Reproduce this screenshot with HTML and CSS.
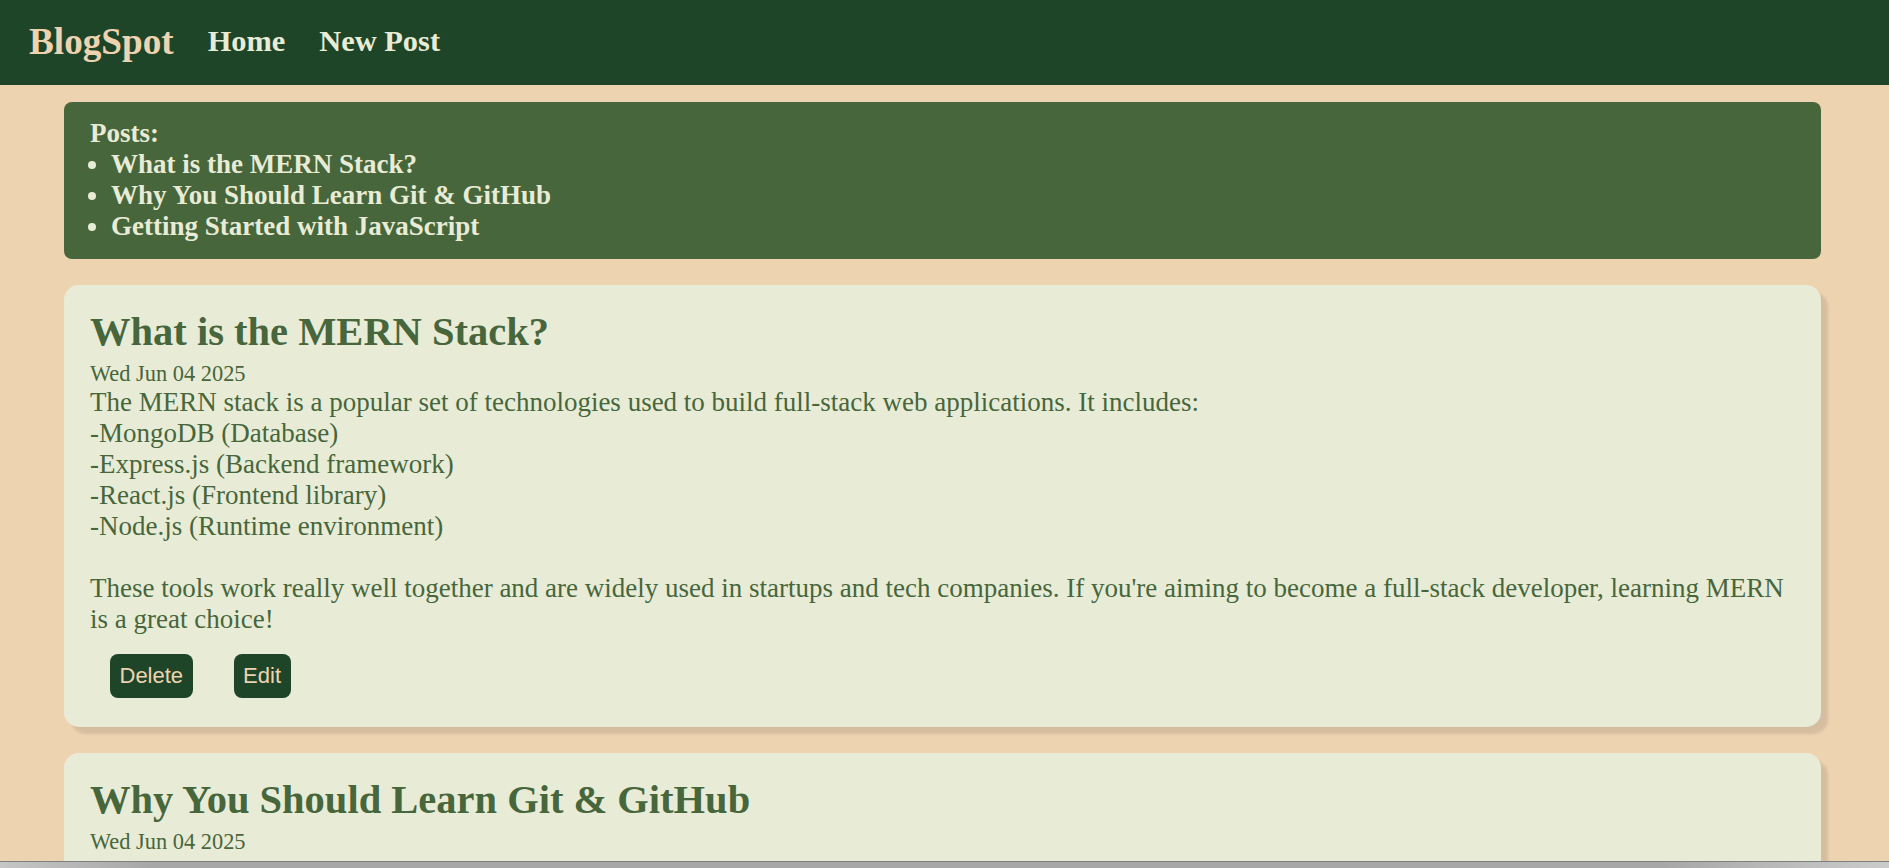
FILE: index.html
```html
<!DOCTYPE html>
<html lang="en">
<head>
<meta charset="utf-8">
<title>BlogSpot</title>
<link rel="stylesheet" href="styles.css">
</head>
<body>
<nav class="navbar">
  <a class="brand" href="#">BlogSpot</a>
  <a class="nav-link" href="#">Home</a>
  <a class="nav-link" href="#">New Post</a>
</nav>
<main class="content">
  <section class="post-index">
    <div class="index-title">Posts:</div>
    <ul class="index-list">
      <li>What is the MERN Stack?</li>
      <li>Why You Should Learn Git &amp; GitHub</li>
      <li>Getting Started with JavaScript</li>
    </ul>
  </section>

  <article class="post-card">
    <h2 class="post-title">What is the MERN Stack?</h2>
    <div class="post-date">Wed Jun 04 2025</div>
    <p class="post-body">The MERN stack is a popular set of technologies used to build full-stack web applications. It includes:<br>-MongoDB (Database)<br>-Express.js (Backend framework)<br>-React.js (Frontend library)<br>-Node.js (Runtime environment)<br><br>These tools work really well together and are widely used in startups and tech companies. If you're aiming to become a full-stack developer, learning MERN is a great choice!</p>
    <div class="post-actions">
      <button class="btn" type="button">Delete</button>
      <button class="btn" type="button">Edit</button>
    </div>
  </article>

  <article class="post-card post-card-last">
    <h2 class="post-title">Why You Should Learn Git &amp; GitHub</h2>
    <div class="post-date">Wed Jun 04 2025</div>
  </article>
</main>
<div class="window-edge"></div>
</body>
</html>
```

FILE: styles.css
```css
html, body {
  margin: 0;
  padding: 0;
}

html {
  overflow: hidden;
}

body {
  background: #EED3B1;
  font-family: "Liberation Serif", "Times New Roman", serif;
  color: #47663B;
}

.navbar {
  display: flex;
  align-items: center;
  gap: 34px;
  height: 85px;
  padding: 0 29px 2px;
  box-sizing: border-box;
  background: #1F4529;
}

.navbar a {
  text-decoration: none;
  font-weight: bold;
}

.brand {
  font-size: 37.2px;
  color: #EED3B1;
}

.nav-link {
  font-size: 30.4px;
  color: #E8ECD7;
}

.content {
  margin: 17px 68px 0 64px;
}

.post-index {
  background: #47663B;
  color: #E8ECD7;
  border-radius: 8px;
  padding: 16px 26px 17px;
  font-size: 27px;
  font-weight: bold;
}

.index-list {
  margin: 0;
  padding-left: 21px;
}

.post-card {
  margin-top: 26px;
  background: #E8ECD7;
  border-radius: 15px;
  padding: 23px 26px 29px;
  box-shadow: 7px 7px 3px rgba(0, 0, 0, 0.1);
}

.post-card-last {
  padding-bottom: 60px;
}

.post-title {
  margin: 0;
  font-size: 40.5px;
  font-weight: bold;
  line-height: normal;
}

.post-date {
  margin-top: 6px;
  font-size: 22.4px;
}

.post-body {
  margin: 0;
  font-size: 27px;
}

.post-actions {
  display: flex;
  gap: 41px;
  margin-top: 19px;
  padding-left: 20px;
}

.btn {
  font-family: "Liberation Sans", Arial, sans-serif;
  font-size: 22px;
  color: #EED3B1;
  background: #1F4529;
  border: 0;
  border-radius: 8px;
  padding: 9px 9.5px;
  line-height: normal;
  cursor: pointer;
}

.window-edge {
  position: fixed;
  left: 0;
  right: 0;
  bottom: 0;
  height: 7px;
  border-top: 1px solid #7f7f7f;
  box-sizing: border-box;
  background: linear-gradient(to right, #c6c6c6, #a7a7a7 8%, #a7a7a7 88%, #cbcbcb);
}
```
